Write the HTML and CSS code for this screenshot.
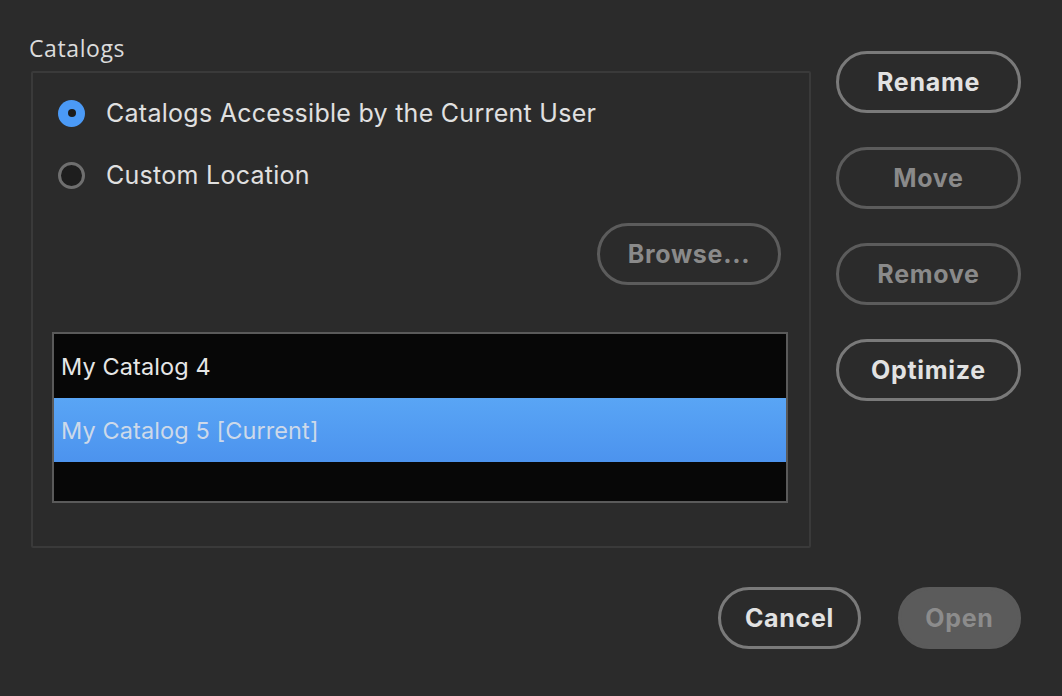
FILE: index.html
```html
<!DOCTYPE html>
<html lang="en">
<head>
<meta charset="utf-8">
<title>Catalogs</title>
<link rel="stylesheet" href="styles.css">
</head>
<body>
<div class="dialog">
  <div class="top">
    <div class="left">
      <div class="group-label">Catalogs</div>
      <div class="group">
        <div class="radio-row">
          <span class="radio checked"></span>
          <span class="radio-text">Catalogs Accessible by the Current User</span>
        </div>
        <div class="radio-row second">
          <span class="radio"></span>
          <span class="radio-text">Custom Location</span>
        </div>
        <div class="browse-row">
          <button class="btn disabled browse">Browse...</button>
        </div>
        <div class="list">
          <div class="list-row">My Catalog 4</div>
          <div class="list-row selected">My Catalog 5 [Current]</div>
        </div>
      </div>
    </div>
    <div class="right">
      <button class="btn side">Rename</button>
      <button class="btn side disabled">Move</button>
      <button class="btn side disabled">Remove</button>
      <button class="btn side">Optimize</button>
    </div>
  </div>
  <div class="bottom">
    <button class="btn cancel">Cancel</button>
    <button class="btn open">Open</button>
  </div>
</div>
</body>
</html>
```
FILE: styles.css
```css
html, body {
  margin: 0;
  padding: 0;
}
body {
  background: #2b2b2b;
  width: 1062px;
  height: 696px;
  overflow: hidden;
  font-family: Inter, "Liberation Sans", sans-serif;
  color: #dedede;
}
.dialog {
  display: flex;
  flex-direction: column;
  padding: 0 41px 0 29px;
}
.top {
  display: flex;
  gap: 25px;
}
.left {
  width: 782px;
}
.group-label {
  font-family: "Open Sans", "Noto Sans", sans-serif;
  font-size: 23px;
  letter-spacing: 0.6px;
  line-height: 30px;
  height: 30px;
  margin-top: 33px;
  color: #dcdcdc;
}
.group {
  margin-top: 8px;
  margin-left: 2px;
  width: 780px;
  height: 477px;
  box-sizing: border-box;
  border: 2px solid #3a3a3a;
  border-radius: 2px;
  padding: 20px 21px 0 19px;
  display: flex;
  flex-direction: column;
}
.radio-row {
  display: flex;
  align-items: center;
  height: 40px;
  padding-left: 6px;
  gap: 21px;
}
.radio-row.second {
  margin-top: 22px;
}
.radio {
  width: 27px;
  height: 27px;
  box-sizing: border-box;
  border-radius: 50%;
  border: 3px solid #6f6f6f;
  background: #1e1e1e;
  flex: none;
  position: relative;
}
.radio.checked {
  border: none;
  background: #4b9af6;
}
.radio.checked::after {
  content: "";
  position: absolute;
  left: 9.5px;
  top: 9.5px;
  width: 8px;
  height: 8px;
  border-radius: 50%;
  background: #1c1c1c;
}
.radio-text {
  font-size: 25px;
  color: #e0e0e0;
  letter-spacing: 0.27px;
}
.browse-row {
  display: flex;
  justify-content: flex-end;
  margin-top: 28px;
  padding-right: 7px;
}
.btn {
  font-family: Inter, "Liberation Sans", sans-serif;
  font-weight: 700;
  font-size: 25px;
  height: 62px;
  box-sizing: border-box;
  border-radius: 31px;
  border: 3px solid #7a7a7a;
  background: transparent;
  color: #e2e2e2;
  padding: 0;
  margin: 0;
  display: flex;
  align-items: center;
  justify-content: center;
  letter-spacing: 0.7px;
}
.btn.disabled {
  border-color: #5c5c5c;
  color: #8a8a8a;
}
.browse {
  width: 184px;
}
.list {
  margin-top: 47px;
  width: 736px;
  height: 171px;
  box-sizing: border-box;
  border: 2px solid #5a5a5a;
  background: #070707;
}
.list-row {
  height: 64px;
  display: flex;
  align-items: center;
  padding-left: 7px;
  font-size: 23.5px;
  color: #e6e6e6;
  letter-spacing: 0.1px;
}
.list-row.selected {
  background: linear-gradient(#59a5f5, #4c93ee);
  color: #cdd9e9;
}
.right {
  display: flex;
  flex-direction: column;
  gap: 34px;
  padding-top: 51px;
  width: 185px;
}
.side {
  width: 185px;
}
.bottom {
  display: flex;
  justify-content: flex-end;
  gap: 37px;
  margin-top: 39px;
}
.cancel {
  width: 143px;
}
.open {
  width: 123px;
  border-color: #5b5b5b;
  background: #5b5b5b;
  color: #8c8c8c;
}
```
